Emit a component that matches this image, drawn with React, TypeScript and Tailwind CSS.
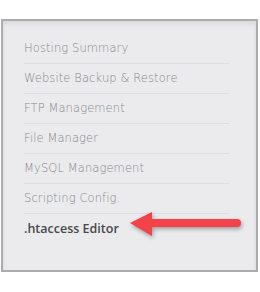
const items = [
  "Hosting Summary",
  "Website Backup & Restore",
  "FTP Management",
  "File Manager",
  "MySQL Management",
  "Scripting Config.",
];

export default function App() {
  return (
    <div className="w-[260px] h-[292px] bg-white pt-[19px] pl-[1px] pr-[2px] font-['DejaVu_Sans',sans-serif]">
      <div className="relative h-[253px] border-2 border-[#acacac] bg-[#ebebed] shadow-[inset_0_3px_4px_rgba(0,0,0,0.08)] pt-[13px] pl-[21px] pr-[27px]">
        <ul>
          {items.map((item) => (
            <li
              key={item}
              className="h-[30px] flex items-center border-b border-[#dddde0] text-[11.5px] font-extralight text-[#88888b] tracking-[0.1px]"
            >
              {item}
            </li>
          ))}
          <li className="h-[30px] flex items-center text-[12.5px] font-semibold text-[#48484b] font-['Open_Sans',sans-serif]">
            .htaccess Editor
          </li>
        </ul>

        {/* arrow */}
        <svg
          className="absolute left-[127px] top-[190px] drop-shadow-[1px_2px_2px_rgba(0,0,0,0.35)]"
          width="112"
          height="26"
          viewBox="0 0 112 26"
        >
          <path d="M0 12 L22 1 L22 25 Z" fill="#f2424a" />
          <path d="M20 12 H107" stroke="#f2424a" strokeWidth="8" strokeLinecap="round" />
        </svg>
      </div>
    </div>
  );
}
